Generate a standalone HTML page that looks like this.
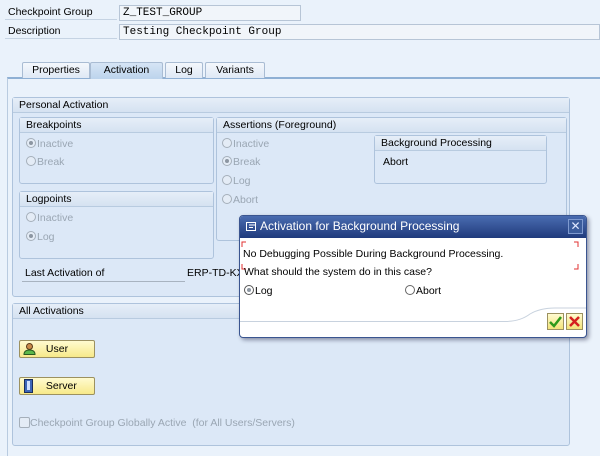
<!DOCTYPE html>
<html><head><meta charset="utf-8"><style>
*{box-sizing:border-box;margin:0;padding:0}
body{width:600px;height:456px;overflow:hidden;background:#eaf2fb;font-family:"Liberation Sans",sans-serif;font-size:10.5px;color:#000;position:relative}
.a{position:absolute}
.lbl{position:absolute;height:15px;line-height:15px;padding-left:3px;border-bottom:1px solid #c5d3e3;background:#eaf2fb}
.inp{position:absolute;height:16px;line-height:14px;border:1px solid #b7c5d6;background:#f1f5fa;font-family:"Liberation Mono",monospace;font-size:11px;padding-left:3px}
.tab{position:absolute;top:62px;height:16px;line-height:15px;text-align:center;background:linear-gradient(#f4f8fc,#dfe9f5);border:1px solid #a9bcd3;border-bottom:none;border-radius:2px 2px 0 0}
.grp{position:absolute;border:1px solid #aec3dc;border-radius:3px;background:#dce8f7}
.gh{height:15px;line-height:14px;padding-left:6px;background:linear-gradient(#e6eef8,#d5e2f1);border-bottom:1px solid #b8cbe0}
.r{position:absolute;color:#9aa6b3;height:14px;line-height:14px}
.r i{display:inline-block;width:10px;height:10px;border:1px solid #a5afba;border-radius:50%;vertical-align:-1px;margin-right:1px;position:relative;background:#e4ecf6}
.r i.s:after{content:"";position:absolute;left:2px;top:2px;width:4px;height:4px;border-radius:50%;background:#8c96a2}
.btn{position:absolute;width:76px;height:18px;border:1px solid #9c9160;border-radius:2px;background:linear-gradient(#fffbd0,#f7e98a);line-height:16px;text-align:center}
</style></head><body>
<div class="lbl" style="left:5px;top:5px;width:112px">Checkpoint Group</div>
<div class="inp" style="left:119px;top:5px;width:182px">Z_TEST_GROUP</div>
<div class="lbl" style="left:5px;top:24px;width:112px">Description</div>
<div class="inp" style="left:119px;top:24px;width:481px">Testing Checkpoint Group</div>

<div class="a" style="left:7px;top:77px;width:593px;height:379px;border-left:1px solid #b9cbe0;border-top:2px solid #8fb0d4;background:#eaf2fb"></div>
<div class="tab" style="left:22px;width:68px">Properties</div>
<div class="tab" style="left:165px;width:38px">Log</div>
<div class="tab" style="left:205px;width:60px">Variants</div>
<div class="tab" style="left:90px;width:73px;background:linear-gradient(#d6e5f5,#bcd3ec);height:17px">Activation</div>

<div class="grp" style="left:12px;top:97px;width:558px;height:200px"><div class="gh">Personal Activation</div></div>
<div class="grp" style="left:19px;top:117px;width:195px;height:67px"><div class="gh">Breakpoints</div></div>
<div class="r" style="left:26px;top:137px"><i class="s"></i>Inactive</div>
<div class="r" style="left:26px;top:155px"><i></i>Break</div>
<div class="grp" style="left:19px;top:191px;width:195px;height:68px"><div class="gh">Logpoints</div></div>
<div class="r" style="left:26px;top:211px"><i></i>Inactive</div>
<div class="r" style="left:26px;top:230px"><i class="s"></i>Log</div>
<div class="grp" style="left:216px;top:117px;width:351px;height:124px"><div class="gh">Assertions (Foreground)</div></div>
<div class="r" style="left:222px;top:137px"><i></i>Inactive</div>
<div class="r" style="left:222px;top:155px"><i class="s"></i>Break</div>
<div class="r" style="left:222px;top:174px"><i></i>Log</div>
<div class="r" style="left:222px;top:193px"><i></i>Abort</div>
<div class="grp" style="left:374px;top:135px;width:173px;height:49px"><div class="gh">Background Processing</div></div>
<div class="a" style="left:383px;top:156px">Abort</div>
<div class="a" style="left:22px;top:267px;width:163px;height:15px;border-bottom:1px solid #a8b3c0;padding-left:3px">Last Activation of</div>
<div class="a" style="left:187px;top:267px">ERP-TD-KXS</div>

<div class="grp" style="left:12px;top:303px;width:558px;height:143px"><div class="gh">All Activations</div></div>
<div class="btn" style="left:19px;top:340px"><svg class="a" style="left:3px;top:2px" width="13" height="12"><circle cx="6.5" cy="3.5" r="3" fill="#c98b4a" stroke="#5a3a1a"/><path d="M1 11.5 Q1 7 6.5 7 Q12 7 12 11.5Z" fill="#5cb84a" stroke="#2a5a20"/></svg>User</div>
<div class="btn" style="left:19px;top:377px"><svg class="a" style="left:4px;top:1px" width="9" height="14"><rect x="0.5" y="0.5" width="8" height="13" fill="#3d66b8" stroke="#1a2d5a"/><rect x="3" y="2" width="3" height="9" fill="#cfe0ff"/></svg>&nbsp;&nbsp;&nbsp;Server</div>
<div class="a" style="left:19px;top:417px;color:#9aa6b3"><span style="display:inline-block;width:11px;height:11px;border:1px solid #a5afba;border-radius:2px;vertical-align:-2px;background:#e4ecf6"></span>Checkpoint Group Globally Active&nbsp; (for All Users/Servers)</div>

<div class="a" style="left:239px;top:215px;width:348px;height:123px;background:#fff;border:1px solid #3a5590;border-radius:4px;box-shadow:2px 2px 4px rgba(0,0,40,.4);overflow:hidden">
 <div style="height:22px;background:linear-gradient(#4a6cb0,#1f3a7c);color:#fff;font-size:12px;line-height:21px;padding-left:20px;position:relative">
  <svg class="a" style="left:6px;top:5px" width="11" height="11"><rect x="0.5" y="1.5" width="9" height="8" fill="none" stroke="#fff"/><path d="M3 4h6M3 6.5h4" stroke="#fff"/></svg>Activation for Background Processing
  <div class="a" style="right:3px;top:3px;width:15px;height:15px;background:#3b5c9c;border:1px solid #7f9ad0;color:#dfe8ff;font-size:12px;line-height:13px;text-align:center">✕</div>
 </div>
 <svg class="a" style="left:1px;top:25px" width="345" height="30"><path d="M1 6V1h4M1 23v5h4M333 1h4v5M333 28h4v-5" fill="none" stroke="#e23030"/></svg>
 <div class="a" style="left:3px;top:32px;color:#000">No Debugging Possible During Background Processing.</div>
 <div class="a" style="left:4px;top:50px;color:#000">What should the system do in this case?</div>
 <div class="r" style="left:4px;top:68px;color:#000"><i class="s" style="background:#fff;border-color:#555"></i>Log</div>
 <div class="r" style="left:165px;top:68px;color:#000"><i style="background:#fff;border-color:#666"></i>Abort</div>
 <svg class="a" style="left:0;top:90px" width="348" height="20"><path d="M0 15.5H265 Q280 15.5 290 8 Q300 2 315 2H348" fill="none" stroke="#c8d2de"/></svg>
 <div class="a" style="left:307px;top:97px;width:17px;height:17px;border:1px solid #9c9160;background:linear-gradient(#fffbd0,#f3e37a)"><svg width="15" height="15"><path d="M2 8l4 4 7-9" fill="none" stroke="#2e9a1a" stroke-width="2.5"/></svg></div>
 <div class="a" style="left:326px;top:97px;width:17px;height:17px;border:1px solid #9c9160;background:linear-gradient(#fffbd0,#f3e37a)"><svg width="15" height="15"><path d="M3 3l9 9M12 3l-9 9" stroke="#d42020" stroke-width="2.5"/></svg></div>
</div>
</body></html>
